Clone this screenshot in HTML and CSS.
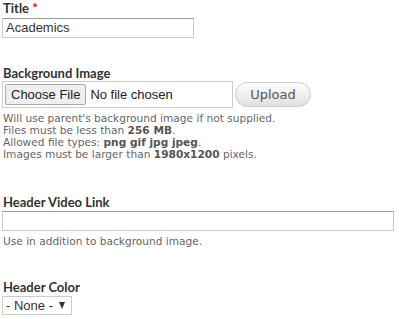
FILE: index.html
```html
<!DOCTYPE html>
<html>
<head>
<meta charset="utf-8">
<link rel="stylesheet" href="styles.css">
</head>
<body>
<form class="form">
  <div class="item item-title">
    <label class="label">Title <span class="req">*</span></label>
    <div class="text-input w-title">Academics</div>
  </div>

  <div class="item item-bg">
    <label class="label">Background Image</label>
    <div class="file-row">
      <div class="file-input">
        <span class="choose">Choose File</span>
        <span class="nofile">No file chosen</span>
      </div>
      <span class="upload">Upload</span>
    </div>
    <div class="desc">
      Will use parent's background image if not supplied.<br>
      Files must be less than <strong>256 MB</strong>.<br>
      Allowed file types: <strong>png gif jpg jpeg</strong>.<br>
      Images must be larger than <strong>1980x1200</strong> pixels.
    </div>
  </div>

  <div class="item item-video">
    <label class="label">Header Video Link</label>
    <div class="text-input w-full"></div>
    <div class="desc desc-video">Use in addition to background image.</div>
  </div>

  <div class="item item-color">
    <label class="label">Header Color</label>
    <div class="select">- None - <span class="arrow"></span></div>
  </div>
</form>
</body>
</html>
```

FILE: styles.css
```css
html, body {
  margin: 0;
  padding: 0;
  background: #fff;
}
body {
  padding: 0 2px;
  font-family: "DejaVu Sans", Verdana, sans-serif;
  color: #333;
}
.form {
  display: flex;
  flex-direction: column;
}
.label {
  display: block;
  font-family: Lato, "DejaVu Sans", sans-serif;
  font-weight: bold;
  font-size: 13px;
  line-height: 15px;
  color: #333;
  padding-left: 1px;
  margin-top: 1px;
}
.req {
  color: #e00;
}
.text-input {
  box-sizing: border-box;
  height: 20px;
  margin-top: 2px;
  border: 1px solid #ccc;
  border-top-color: #999;
  font-family: "Liberation Sans", Arial, sans-serif;
  font-size: 13px;
  line-height: 18px;
  padding: 0 3px;
  color: #333;
}
.w-title { width: 192px; }
.w-full { width: 392px; margin-top: 1px; }

.item-bg { margin-top: 27px; }
.file-row {
  display: flex;
  align-items: center;
  gap: 2px;
}
.file-input {
  box-sizing: border-box;
  width: 231px;
  height: 27px;
  border: 1px solid #ccc;
  display: flex;
  align-items: center;
  padding-left: 2px;
  font-family: "Liberation Sans", Arial, sans-serif;
  font-size: 13px;
}
.choose {
  box-sizing: border-box;
  height: 21px;
  line-height: 19px;
  padding: 0 5px;
  border: 1px solid #a9a9a9;
  background: #efefef;
  color: #222;
  border-radius: 2px;
}
.nofile {
  margin-left: 4px;
  color: #222;
}
.upload {
  box-sizing: border-box;
  width: 76px;
  height: 25px;
  border: 1px solid #ccc;
  border-radius: 13px;
  background: linear-gradient(#fefefe, #e0e0e0);
  color: #555;
  font-size: 13px;
  line-height: 23px;
  text-align: center;
}
.desc {
  font-size: 10.6px;
  line-height: 12px;
  color: #666;
  margin-top: 4px;
  padding-left: 1px;
}
.desc strong {
  color: #555;
}
.desc-video { margin-top: 4px; }
.item-video { margin-top: 34px; }
.item-color { margin-top: 32px; }
.select {
  box-sizing: border-box;
  width: 70px;
  height: 19px;
  margin-top: 1px;
  border: 1px solid #ccc;
  font-family: "Liberation Sans", Arial, sans-serif;
  font-size: 13px;
  line-height: 17px;
  padding-left: 3px;
  color: #333;
  position: relative;
}
.arrow {
  position: absolute;
  right: 6px;
  top: 5px;
  width: 0;
  height: 0;
  border-left: 3.5px solid transparent;
  border-right: 3.5px solid transparent;
  border-top: 7px solid #333;
}
```
